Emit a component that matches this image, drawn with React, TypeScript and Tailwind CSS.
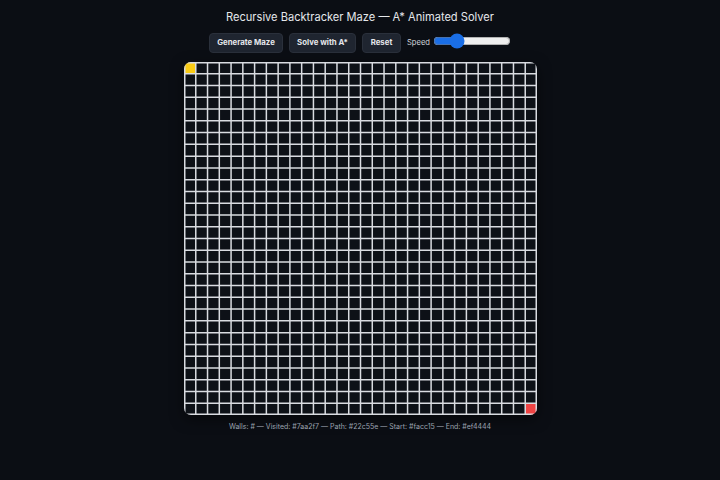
const COLS = 30;
const ROWS = 30;
const SIZE = 353;
const CELL = SIZE / COLS;

function Maze() {
  const lines = [];
  for (let i = 0; i <= COLS; i++) {
    const p = Math.min(Math.max(i * CELL, 0.75), SIZE - 0.75);
    lines.push(<line key={"v" + i} x1={p} y1={0} x2={p} y2={SIZE} />);
  }
  for (let j = 0; j <= ROWS; j++) {
    const p = Math.min(Math.max(j * CELL, 0.75), SIZE - 0.75);
    lines.push(<line key={"h" + j} x1={0} y1={p} x2={SIZE} y2={p} />);
  }
  return (
    <div className="rounded-[7px] overflow-hidden bg-[#0d1117] shadow-[0_4px_14px_rgba(0,0,0,0.5)]" style={{ width: SIZE, height: SIZE }}>
      <svg width={SIZE} height={SIZE}>
        <rect x={0} y={0} width={CELL} height={CELL} fill="#facc15" />
        <rect x={SIZE - CELL} y={SIZE - CELL} width={CELL} height={CELL} fill="#ef4444" />
        <g stroke="#d9dce1" strokeWidth={1.5}>{lines}</g>
      </svg>
    </div>
  );
}

export default function App() {
  return (
    <div className="w-[720px] h-[480px] bg-[#0b0e14] flex flex-col items-center font-['Inter',sans-serif] text-[#e5e7eb]">
      {/* titulo */}
      <h1 className="mt-[10px] text-[11.1px] leading-[14px] font-normal">
        Recursive Backtracker Maze — A* Animated Solver
      </h1>

      {/* controles */}
      <div className="mt-[9px] flex items-center gap-[6px]">
        <button className="h-[20px] w-[74px] rounded-[4px] bg-[#1f2530] border border-[#2a303b] text-[7.8px] font-bold text-[#e5e7eb]">
          Generate Maze
        </button>
        <button className="h-[20px] w-[67px] rounded-[4px] bg-[#1f2530] border border-[#2a303b] text-[7.8px] font-bold text-[#e5e7eb]">
          Solve with A*
        </button>
        <button className="h-[20px] w-[39px] rounded-[4px] bg-[#1f2530] border border-[#2a303b] text-[7.8px] font-bold text-[#e5e7eb]">
          Reset
        </button>
        <label className="flex items-center gap-[3px] text-[7.6px] text-[#d1d5db] -mt-[4px]">
          <span className="mt-[4px]">Speed</span>
          <input type="range" min={1} max={100} defaultValue={27} className="w-[78px] h-[10px] accent-[#1a6ee6]" />
        </label>
      </div>

      <div className="mt-[9px]">
        <Maze />
      </div>

      <p className="mt-[7px] text-[7px] text-[#9ca3af]">
        Walls: # — Visited: #7aa2f7 — Path: #22c55e — Start: #facc15 — End: #ef4444
      </p>
    </div>
  );
}
